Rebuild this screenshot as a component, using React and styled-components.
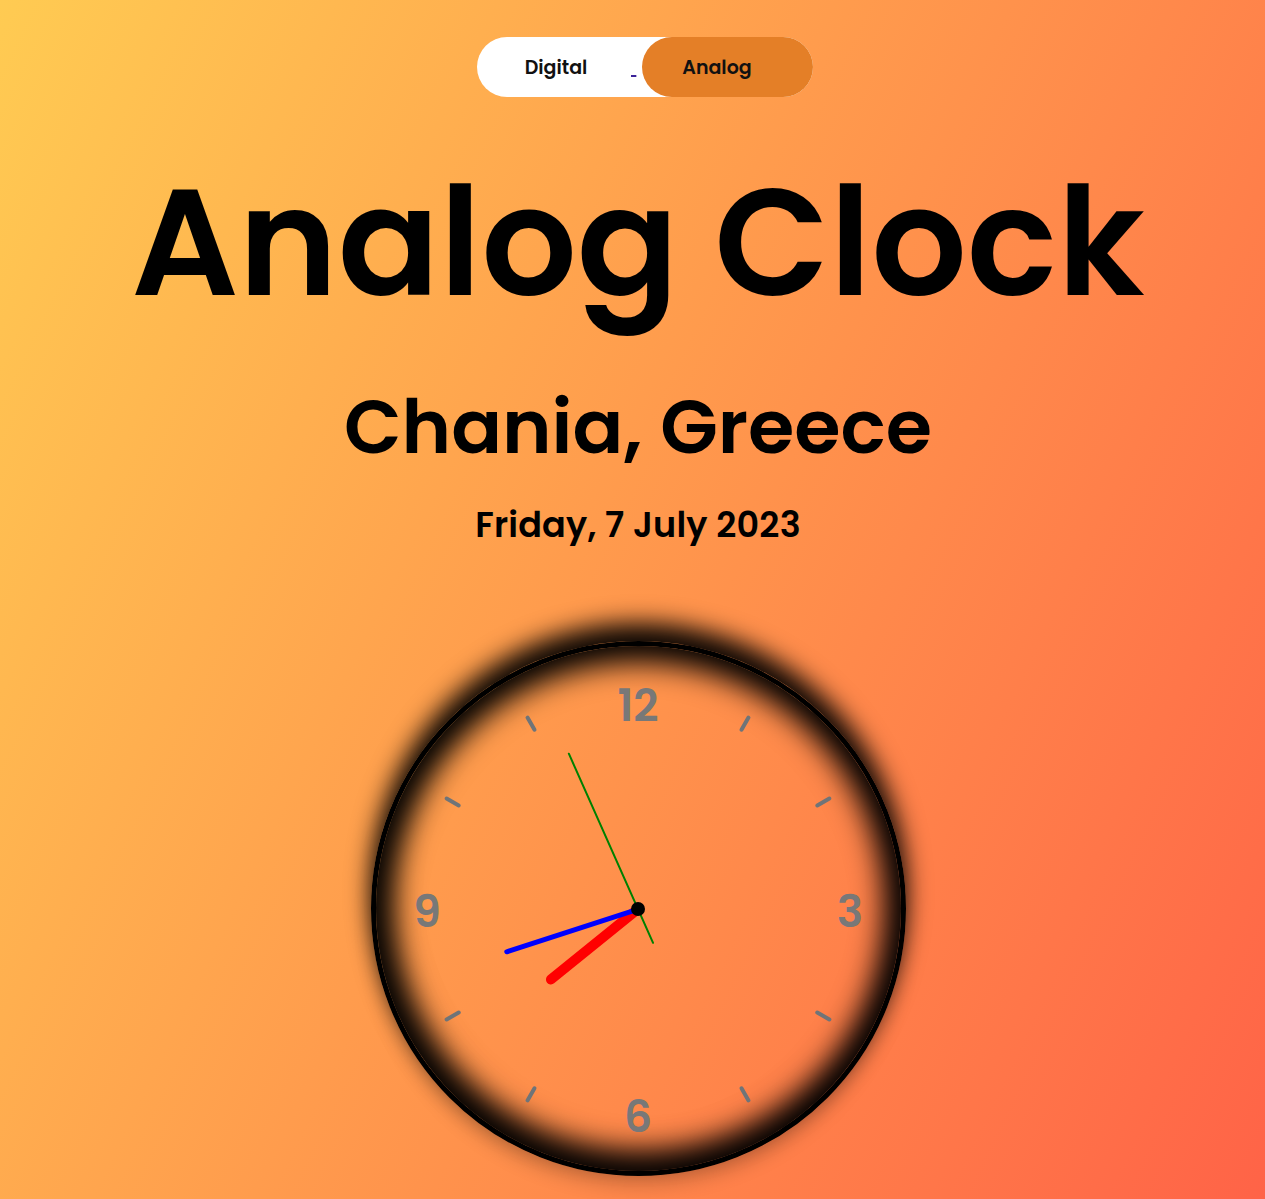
import React from 'react';
import styled, { createGlobalStyle } from "styled-components";

const GlobalStyle = createGlobalStyle`
    html, body {
        margin: 0;
        padding: 0;
    }
    body {
        font-family: Poppins, Inter, "Noto Sans", sans-serif;
        background: linear-gradient(116deg, #ffcb52, #ff6347);
        min-height: 100vh;
    }
`;

const Page = styled.div`
    display: flex;
    flex-direction: column;
    align-items: center;
    min-height: 100vh;
    box-sizing: border-box;
    padding: 37px 0 0 11px;
`;

const Switch = styled.nav`
    display: flex;
    width: 336px;
    height: 60px;
    margin-left: 14px;
    background: #ffffff;
    border-radius: 30px;
`;

const Option = styled.a`
    display: flex;
    align-items: center;
    justify-content: center;
    box-sizing: border-box;
    width: ${(p) => p.$width}px;
    padding: ${(p) => p.$pad};
    border-radius: 30px;
    font-size: 19px;
    font-weight: 600;
    color: #111111;
    text-decoration: none;
    background: ${(p) => (p.$active ? "#e47f27" : "transparent")};
`;

const Gap = styled.a`
    display: flex;
    align-items: center;
    width: 11px;
    font-size: 20px;
    color: #3b2399;
    text-decoration: underline;
`;

const Title = styled.h1`
    margin: 71px 0 0;
    font-size: 150px;
    line-height: 150px;
    font-weight: 600;
    color: #000000;
`;

const City = styled.h2`
    margin: 71px 0 0;
    font-size: 75px;
    line-height: 75px;
    font-weight: 600;
    color: #000000;
`;

const DateLine = styled.p`
    margin: 43px 0 0;
    font-size: 35px;
    line-height: 35px;
    font-weight: 600;
    letter-spacing: 0.2px;
    color: #000000;
`;

const Face = styled.div`
    position: relative;
    width: 525px;
    height: 525px;
    margin-top: 99px;
    border: 5px solid #000000;
    border-radius: 50%;
    box-shadow:
        0 -18px 24px rgba(0, 0, 0, 0.95),
        0 10px 18px rgba(0, 0, 0, 0.18),
        inset 0 0 30px 16px #000000,
        inset 6px -14px 34px rgba(0, 0, 0, 0.6);
`;

const Numeral = styled.span`
    position: absolute;
    left: 50%;
    top: 50%;
    font-size: 44px;
    line-height: 44px;
    font-weight: 600;
    color: #787878;
    transform: translate(calc(-50% + ${(p) => p.$x}px), calc(-50% + ${(p) => p.$y}px));
`;

const Tick = styled.div`
    position: absolute;
    left: 50%;
    top: 50%;
    width: 4px;
    height: 18px;
    margin: -9px 0 0 -2px;
    border-radius: 2px;
    background: #6f7478;
    transform: rotate(${(p) => p.$deg}deg) translateY(-214px);
`;

const Hand = styled.div`
    position: absolute;
    left: 50%;
    bottom: calc(50% - ${(p) => p.$tail}px);
    width: ${(p) => p.$w}px;
    height: ${(p) => p.$len + p.$tail}px;
    margin-left: ${(p) => -p.$w / 2}px;
    border-radius: ${(p) => p.$w / 2}px;
    background: ${(p) => p.$color};
    transform-origin: 50% calc(100% - ${(p) => p.$tail}px);
    transform: rotate(${(p) => p.$deg}deg);
`;

const Pin = styled.div`
    position: absolute;
    left: 50%;
    top: 50%;
    width: 14px;
    height: 14px;
    margin: -7px 0 0 -7px;
    border-radius: 50%;
    background: #000000;
`;

const time = { h: 7, m: 42, s: 56 };

const numerals = [
    { label: "12", x: 0, y: -203 },
    { label: "3", x: 212, y: 3 },
    { label: "6", x: 0, y: 208 },
    { label: "9", x: -211, y: 3 },
];

const ticks = [30, 60, 120, 150, 210, 240, 300, 330];

function App() {
    const hourDeg = (time.h % 12 + time.m / 60) * 30;
    const minuteDeg = time.m * 6;
    const secondDeg = time.s * 6;

    return (
        <Page>
            <GlobalStyle />
            <Switch>
                <Option href="#" $width={154} $pad="0 0 0 4px">Digital</Option>
                <Gap href="#">&nbsp;</Gap>
                <Option href="#" $active $width={171} $pad="0 21px 0 0">Analog</Option>
            </Switch>
            <Title>Analog Clock</Title>
            <City>Chania, Greece</City>
            <DateLine>Friday, 7 July 2023</DateLine>
            <Face>
                {ticks.map((deg) => (
                    <Tick key={deg} $deg={deg} />
                ))}
                {numerals.map((n) => (
                    <Numeral key={n.label} $x={n.x} $y={n.y}>{n.label}</Numeral>
                ))}
                <Hand $color="#ff0000" $w={10} $len={117} $tail={0} $deg={hourDeg} />
                <Hand $color="#0000ff" $w={5} $len={141} $tail={0} $deg={minuteDeg} />
                <Hand $color="#008000" $w={2} $len={171} $tail={38} $deg={secondDeg} />
                <Pin />
            </Face>
        </Page>
    );
}

export default App;
